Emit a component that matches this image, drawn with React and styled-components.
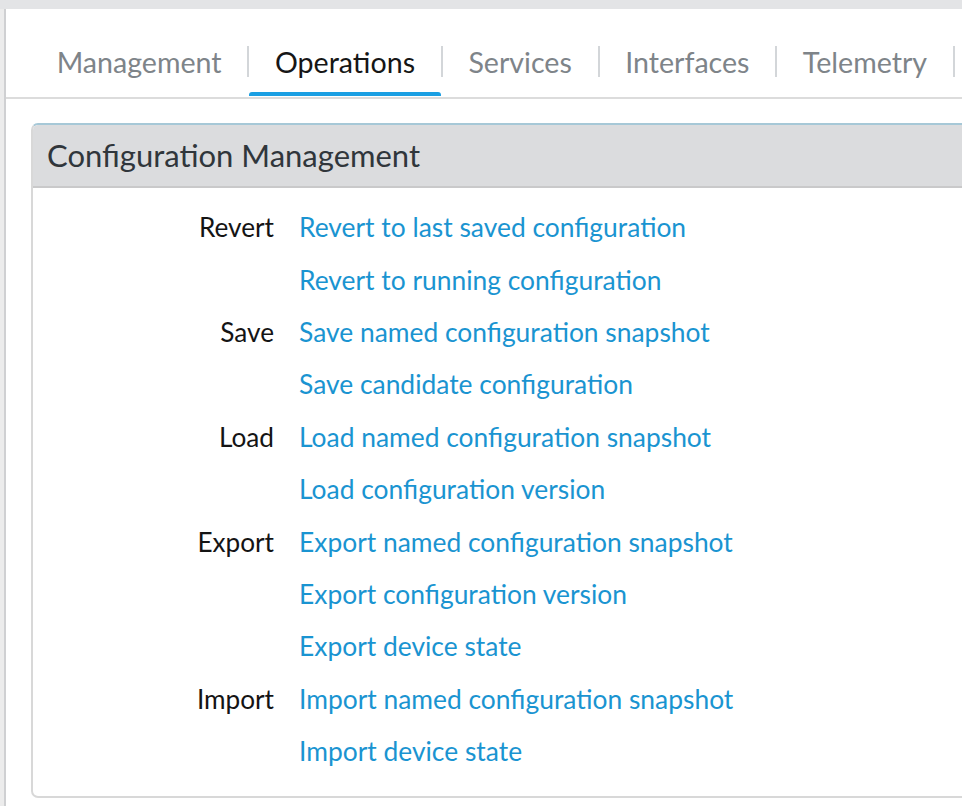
import React from "react";
import styled, { createGlobalStyle } from "styled-components";

const GlobalStyle = createGlobalStyle`
  html, body {
    margin: 0;
    padding: 0;
    background: #ffffff;
    overflow: hidden;
  }
  body {
    font-family: Lato, "Open Sans", "Liberation Sans", sans-serif;
  }
`;

const tabs = ["Management", "Operations", "Services", "Interfaces", "Telemetry"];

const groups = [
  { label: "Revert", links: ["Revert to last saved configuration", "Revert to running configuration"] },
  { label: "Save", links: ["Save named configuration snapshot", "Save candidate configuration"] },
  { label: "Load", links: ["Load named configuration snapshot", "Load configuration version"] },
  {
    label: "Export",
    links: ["Export named configuration snapshot", "Export configuration version", "Export device state"],
  },
  { label: "Import", links: ["Import named configuration snapshot", "Import device state"] },
];

const App = () => {
  const active = "Operations";

  return (
    <>
      <GlobalStyle />
      <Page>
        <TopStrip />
        <Content>
          <TabBar>
            {tabs.map((t, i) => (
              <React.Fragment key={t}>
                {i > 0 && <Separator />}
                <Tab $active={t === active}>{t}</Tab>
              </React.Fragment>
            ))}
            <Separator />
          </TabBar>

          <Panel>
            <PanelHeader>Configuration Management</PanelHeader>
            <PanelBody>
              {groups.map((g) =>
                g.links.map((l, i) => (
                  <React.Fragment key={l}>
                    <RowLabel>{i === 0 ? g.label : ""}</RowLabel>
                    <RowLink href="#">{l}</RowLink>
                  </React.Fragment>
                ))
              )}
            </PanelBody>
          </Panel>
        </Content>
      </Page>
    </>
  );
};

export default App;

const Page = styled.div`
  width: 962px;
  height: 806px;
  display: flex;
  flex-direction: column;
  overflow: hidden;
`;

const TopStrip = styled.div`
  height: 9px;
  background: #e3e4e6;
  flex-shrink: 0;
`;

const Content = styled.div`
  flex: 1;
  min-height: 0;
  border-left: 4px solid #ececec;
  display: flex;
  flex-direction: column;
  position: relative;

  &::before {
    content: "";
    position: absolute;
    left: 0;
    top: 0;
    bottom: 0;
    width: 2px;
    background: #cfd0d2;
  }
`;

const TabBar = styled.div`
  height: 90px;
  margin-left: 2px;
  padding-left: 25px;
  display: flex;
  align-items: flex-end;
  border-bottom: 2px solid #dcdcdc;
  box-sizing: border-box;
  flex-shrink: 0;
  overflow: hidden;
`;

const Separator = styled.span`
  width: 2px;
  height: 31px;
  margin-bottom: 20px;
  background: #d3d6d9;
  flex-shrink: 0;
`;

const Tab = styled.div`
  position: relative;
  height: 66px;
  line-height: 62px;
  padding: 0 25.7px;
  font-size: 28.6px;
  color: ${(p) => (p.$active ? "#161616" : "#7e8489")};
  white-space: nowrap;
  flex-shrink: 0;
  cursor: pointer;

  &::after {
    content: "";
    position: absolute;
    left: 0;
    right: 0;
    bottom: 1px;
    height: 4px;
    border-radius: 3px 3px 0 0;
    background: ${(p) => (p.$active ? "#1a9fe3" : "transparent")};
  }
`;

const Panel = styled.div`
  margin: 24px 0 0 27px;
  width: calc(100% + 40px);
  border: 2px solid #d8d8d8;
  border-top-color: #a6c8d7;
  border-radius: 7px;
  overflow: hidden;
  flex-shrink: 0;
`;

const PanelHeader = styled.div`
  height: 61px;
  line-height: 61px;
  padding-left: 14px;
  background: #dbdcde;
  border-bottom: 2px solid #c9c9ca;
  font-size: 31px;
  color: #30363b;
`;

const PanelBody = styled.div`
  display: grid;
  grid-template-columns: 241px auto;
  grid-auto-rows: 52.4px;
  column-gap: 25px;
  align-items: center;
  padding: 13px 0 19px;
`;

const RowLabel = styled.span`
  text-align: right;
  font-size: 26.2px;
  color: #141414;
`;

const RowLink = styled.a`
  justify-self: start;
  font-size: 26.4px;
  color: #1a94d1;
  text-decoration: none;
`;
